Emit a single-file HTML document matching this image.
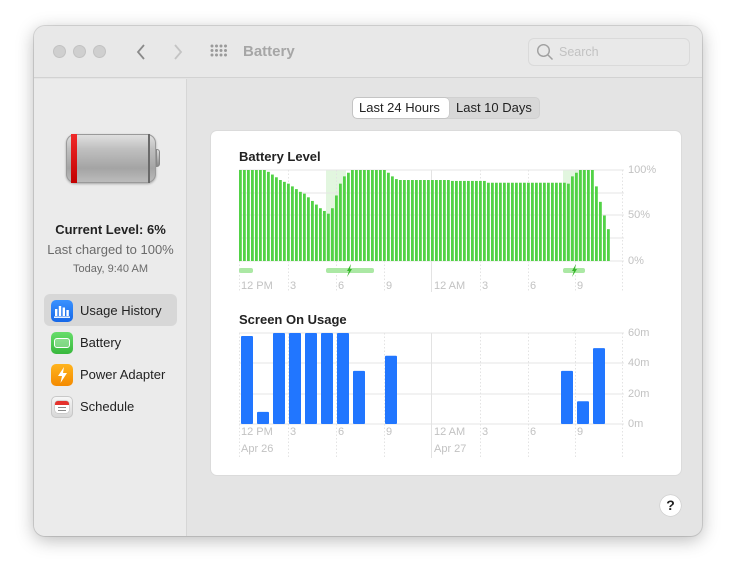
<!DOCTYPE html>
<html><head><meta charset="utf-8"><style>
*{margin:0;padding:0;box-sizing:border-box}
body{width:736px;height:578px;background:#fff;font-family:"Liberation Sans",sans-serif;position:relative;overflow:hidden}
.win{position:absolute;left:34px;top:26px;width:668px;height:510px;border-radius:11px;background:#e4e4e4;overflow:hidden;box-shadow:0 4px 18px rgba(0,0,0,.28),0 0 0 1px rgba(0,0,0,.12)}
.tb{position:absolute;left:0;top:0;width:668px;height:52px;background:#e8e8e8;border-bottom:1px solid #d2d2d2}
.dot{position:absolute;top:19px;width:13px;height:13px;border-radius:50%;background:#cfcfcf;border:1px solid #c2c2c2}
.side{position:absolute;left:0;top:53px;width:153px;height:457px;background:#ebebeb;border-right:1px solid #d6d6d6}
.t{position:absolute;white-space:nowrap}
.card{position:absolute;left:177px;top:105px;width:470px;height:344px;background:#fff;border-radius:6px;box-shadow:0 0 0 1px rgba(0,0,0,.04)}
.ax{position:absolute;font-size:11px;color:#c2c2c2;white-space:nowrap}
.nav{position:absolute;left:17px;width:22px;height:22px;border-radius:5px}
</style></head><body>
<div class="win">
 <div class="tb">
  <div class="dot" style="left:19px"></div><div class="dot" style="left:39px"></div><div class="dot" style="left:59px"></div>
  <svg class="t" style="left:100px;top:16px" width="14" height="20"><path d="M10 3 L4 10 L10 17" stroke="#8a8a8a" stroke-width="1.8" fill="none"/></svg>
  <svg class="t" style="left:137px;top:16px" width="14" height="20"><path d="M4 3 L10 10 L4 17" stroke="#c4c4c4" stroke-width="1.8" fill="none"/></svg>
  <svg class="t" style="left:175px;top:17px" width="20" height="18" fill="#9a9a9a">
   <circle cx="3" cy="3" r="1.5"/><circle cx="7.5" cy="3" r="1.5"/><circle cx="12" cy="3" r="1.5"/><circle cx="16.5" cy="3" r="1.5"/>
   <circle cx="3" cy="7.5" r="1.5"/><circle cx="7.5" cy="7.5" r="1.5"/><circle cx="12" cy="7.5" r="1.5"/><circle cx="16.5" cy="7.5" r="1.5"/>
   <circle cx="3" cy="12" r="1.5"/><circle cx="7.5" cy="12" r="1.5"/><circle cx="12" cy="12" r="1.5"/><circle cx="16.5" cy="12" r="1.5"/>
  </svg>
  <div class="t" style="left:209px;top:17px;font-size:15px;font-weight:bold;color:#a6a6a6">Battery</div>
  <div class="t" style="left:494px;top:12px;width:162px;height:28px;border:1px solid #dadada;border-radius:6px;background:#e9e9e9"></div>
  <svg class="t" style="left:502px;top:17px" width="18" height="18"><circle cx="7.5" cy="7.5" r="5.8" stroke="#a0a0a0" stroke-width="1.4" fill="none"/><path d="M12 12 L16.5 16.5" stroke="#a0a0a0" stroke-width="1.5"/></svg>
  <div class="t" style="left:525px;top:19px;font-size:12.5px;color:#c2c2c2">Search</div>
 </div>
 <div class="side">
  <div class="t" style="left:32px;top:55px;width:90px;height:49px;border-radius:9px;background:linear-gradient(#e2e2e2,#c0c0c0 30%,#a4a4a4 70%,#bdbdbd);box-shadow:inset 0 0 0 1px #9a9a9a,0 1px 2px rgba(0,0,0,.3)"></div>
  <div class="t" style="left:37px;top:55px;width:6px;height:49px;background:linear-gradient(#f02a2a,#c20000)"></div>
  <div class="t" style="left:114px;top:55px;width:2px;height:49px;background:#6a6a6a"></div>
  <div class="t" style="left:122px;top:70px;width:4px;height:18px;border-radius:0 3px 3px 0;background:linear-gradient(#ddd,#888);border:1px solid #888"></div>
  <div class="t" style="left:0;top:143px;width:153px;text-align:center;font-size:13px;font-weight:bold;color:#222">Current Level: 6%</div>
  <div class="t" style="left:0;top:163px;width:153px;text-align:center;font-size:13px;color:#6a6a6a">Last charged to 100%</div>
  <div class="t" style="left:0;top:184px;width:153px;text-align:center;font-size:11px;color:#6a6a6a">Today, 9:40 AM</div>
  <div class="t" style="left:10px;top:215px;width:133px;height:32px;border-radius:6px;background:#d7d7d7"></div>
  <div class="nav" style="top:221px;background:linear-gradient(#3a92ff,#1567e8)"></div>
  <svg class="t" style="left:20px;top:224px" width="17" height="16" fill="#fff"><rect x="1" y="6" width="2.4" height="7"/><rect x="4.8" y="3" width="2.4" height="10"/><rect x="8.6" y="4.5" width="2.4" height="8.5"/><rect x="12.4" y="7" width="2.4" height="6"/><rect x="0" y="13.5" width="16" height="1.4"/></svg>
  <div class="t" style="left:46px;top:224px;font-size:13px;color:#222">Usage History</div>
  <div class="nav" style="top:253px;background:linear-gradient(#66dd6a,#38b83d)"></div>
  <div class="t" style="left:20px;top:259px;width:16px;height:10px;border:1.5px solid #fff;border-radius:3px;background:rgba(255,255,255,.3)"></div>
  <div class="t" style="left:46px;top:256px;font-size:13px;color:#222">Battery</div>
  <div class="nav" style="top:285px;background:linear-gradient(#ffb41e,#f48a00)"></div>
  <svg class="t" style="left:23px;top:287px" width="11" height="18"><path d="M7 1 L1 10 L5 10 L3.5 17 L10 7 L6 7 Z" fill="#fff"/></svg>
  <div class="t" style="left:46px;top:288px;font-size:13px;color:#222">Power Adapter</div>
  <div class="nav" style="top:317px;background:linear-gradient(#f8f8f8,#d6d6d6);box-shadow:inset 0 0 0 1px #c8c8c8"></div>
  <div class="t" style="left:21px;top:322px;width:14px;height:12px;border-radius:3px;background:#fff;border-top:4px solid #e5322d;box-shadow:0 0 0 .5px #bbb"></div>
  <div class="t" style="left:24px;top:328px;width:8px;height:1px;background:#888"></div><div class="t" style="left:24px;top:331px;width:8px;height:1px;background:#888"></div>
  <div class="t" style="left:46px;top:320px;font-size:13px;color:#222">Schedule</div>
 </div>
 <div class="t" style="left:318px;top:71px;width:188px;height:22px;border-radius:5px;background:#d8d8d8;border:1px solid #d0d0d0"></div>
 <div class="t" style="left:319px;top:72px;width:96px;height:20px;border-radius:4px;background:#fff;box-shadow:0 0 1px rgba(0,0,0,.35)"></div>
 <div class="t" style="left:325px;top:74px;font-size:13px;color:#222">Last 24 Hours</div>
 <div class="t" style="left:422px;top:74px;font-size:13px;color:#222">Last 10 Days</div>
 <div class="card"></div>
 <div class="t" style="left:626px;top:469px;width:21px;height:21px;border-radius:50%;background:#fff;box-shadow:0 0 1px rgba(0,0,0,.4);text-align:center;font-size:14px;font-weight:bold;line-height:21px;color:#222">?</div>
</div>
<div class="t" style="left:239px;top:149px;font-size:13px;font-weight:bold;color:#222">Battery Level</div>
<div class="t" style="left:239px;top:312px;font-size:13px;font-weight:bold;color:#222">Screen On Usage</div>
<svg class="t" style="left:0;top:0" width="736" height="578" id="ch"></svg>
<div class="ax" style="left:628px;top:164px">100%</div><div class="ax" style="left:628px;top:209px">50%</div><div class="ax" style="left:628px;top:255px">0%</div>
<div class="ax" style="left:628px;top:327px">60m</div><div class="ax" style="left:628px;top:357px">40m</div><div class="ax" style="left:628px;top:388px">20m</div><div class="ax" style="left:628px;top:418px">0m</div>
<div id="lb"></div>
<script>
var s='',L=[[241,'12 PM'],[290,'3'],[338,'6'],[386,'9'],[434,'12 AM'],[482,'3'],[530,'6'],[577,'9']];
var xs=[239,288,336,384,431,480,528,575,622];
s+='<rect x="326" y="170" width="20" height="91" fill="#e2f6df"/><rect x="563" y="170" width="22" height="91" fill="#e2f6df"/>';
[170,193,215,238,261].forEach(function(y){s+='<line x1="239" x2="624" y1="'+y+'" y2="'+y+'" stroke="#e6e6e6"/>'});
[333,363,394,424].forEach(function(y){s+='<line x1="239" x2="624" y1="'+y+'" y2="'+y+'" stroke="#e6e6e6"/>'});
xs.forEach(function(x,i){var sol=(x==431);
 s+='<line x1="'+(x+.5)+'" x2="'+(x+.5)+'" y1="170" y2="292" stroke="#e3e3e3" '+(sol?'':'stroke-dasharray="1.5,2"')+'/>';
 s+='<line x1="'+(x+.5)+'" x2="'+(x+.5)+'" y1="333" y2="458" stroke="#e3e3e3" '+(sol?'':'stroke-dasharray="1.5,2"')+'/>';});
var v=[100,100,100,100,100,100,100,98,95,92,89,87,85,82,79,76,74,70,66,62,58,55,52,58,72,85,93,97];
while(v.length<37)v.push(100);v.push(97,93,90);
while(v.length<53)v.push(89);while(v.length<62)v.push(88);while(v.length<82)v.push(86);
v.push(85,93,97,100,100,100,100,82,65,50,35);
v.forEach(function(p,i){var h=p*0.91;s+='<rect x="'+(239+4*i)+'" y="'+(261-h)+'" width="2.8" height="'+h+'" fill="#52d246"/>'});
s+='<rect x="239" y="268" width="14" height="5" rx="2" fill="#abe8a4"/><rect x="326" y="268" width="48" height="5" rx="2" fill="#abe8a4"/><rect x="563" y="268" width="22" height="5" rx="2" fill="#abe8a4"/>';
[[349],[574]].forEach(function(a){var x=a[0];s+='<path d="M'+(x+2)+' 264 L'+(x-2)+' 271 L'+x+' 271 L'+(x-2)+' 277 L'+(x+3)+' 269 L'+(x+1)+' 269 Z" fill="#36b52a"/>'});
var u={0:58,1:8,2:60,3:60,4:60,5:60,6:60,7:35,9:45,20:35,21:15,22:50};
for(var k in u){var h=u[k]*91/60;s+='<rect x="'+(241+16*k)+'" y="'+(424-h)+'" width="12" height="'+h+'" rx="1" fill="#2176ff"/>'}
document.getElementById('ch').innerHTML=s;
var t='';L.forEach(function(a){t+='<div class="ax" style="left:'+a[0]+'px;top:280px">'+a[1]+'</div><div class="ax" style="left:'+a[0]+'px;top:426px">'+a[1]+'</div>'});
t+='<div class="ax" style="left:241px;top:443px">Apr 26</div><div class="ax" style="left:434px;top:443px">Apr 27</div>';
document.getElementById('lb').innerHTML=t;
</script>
</body></html>
